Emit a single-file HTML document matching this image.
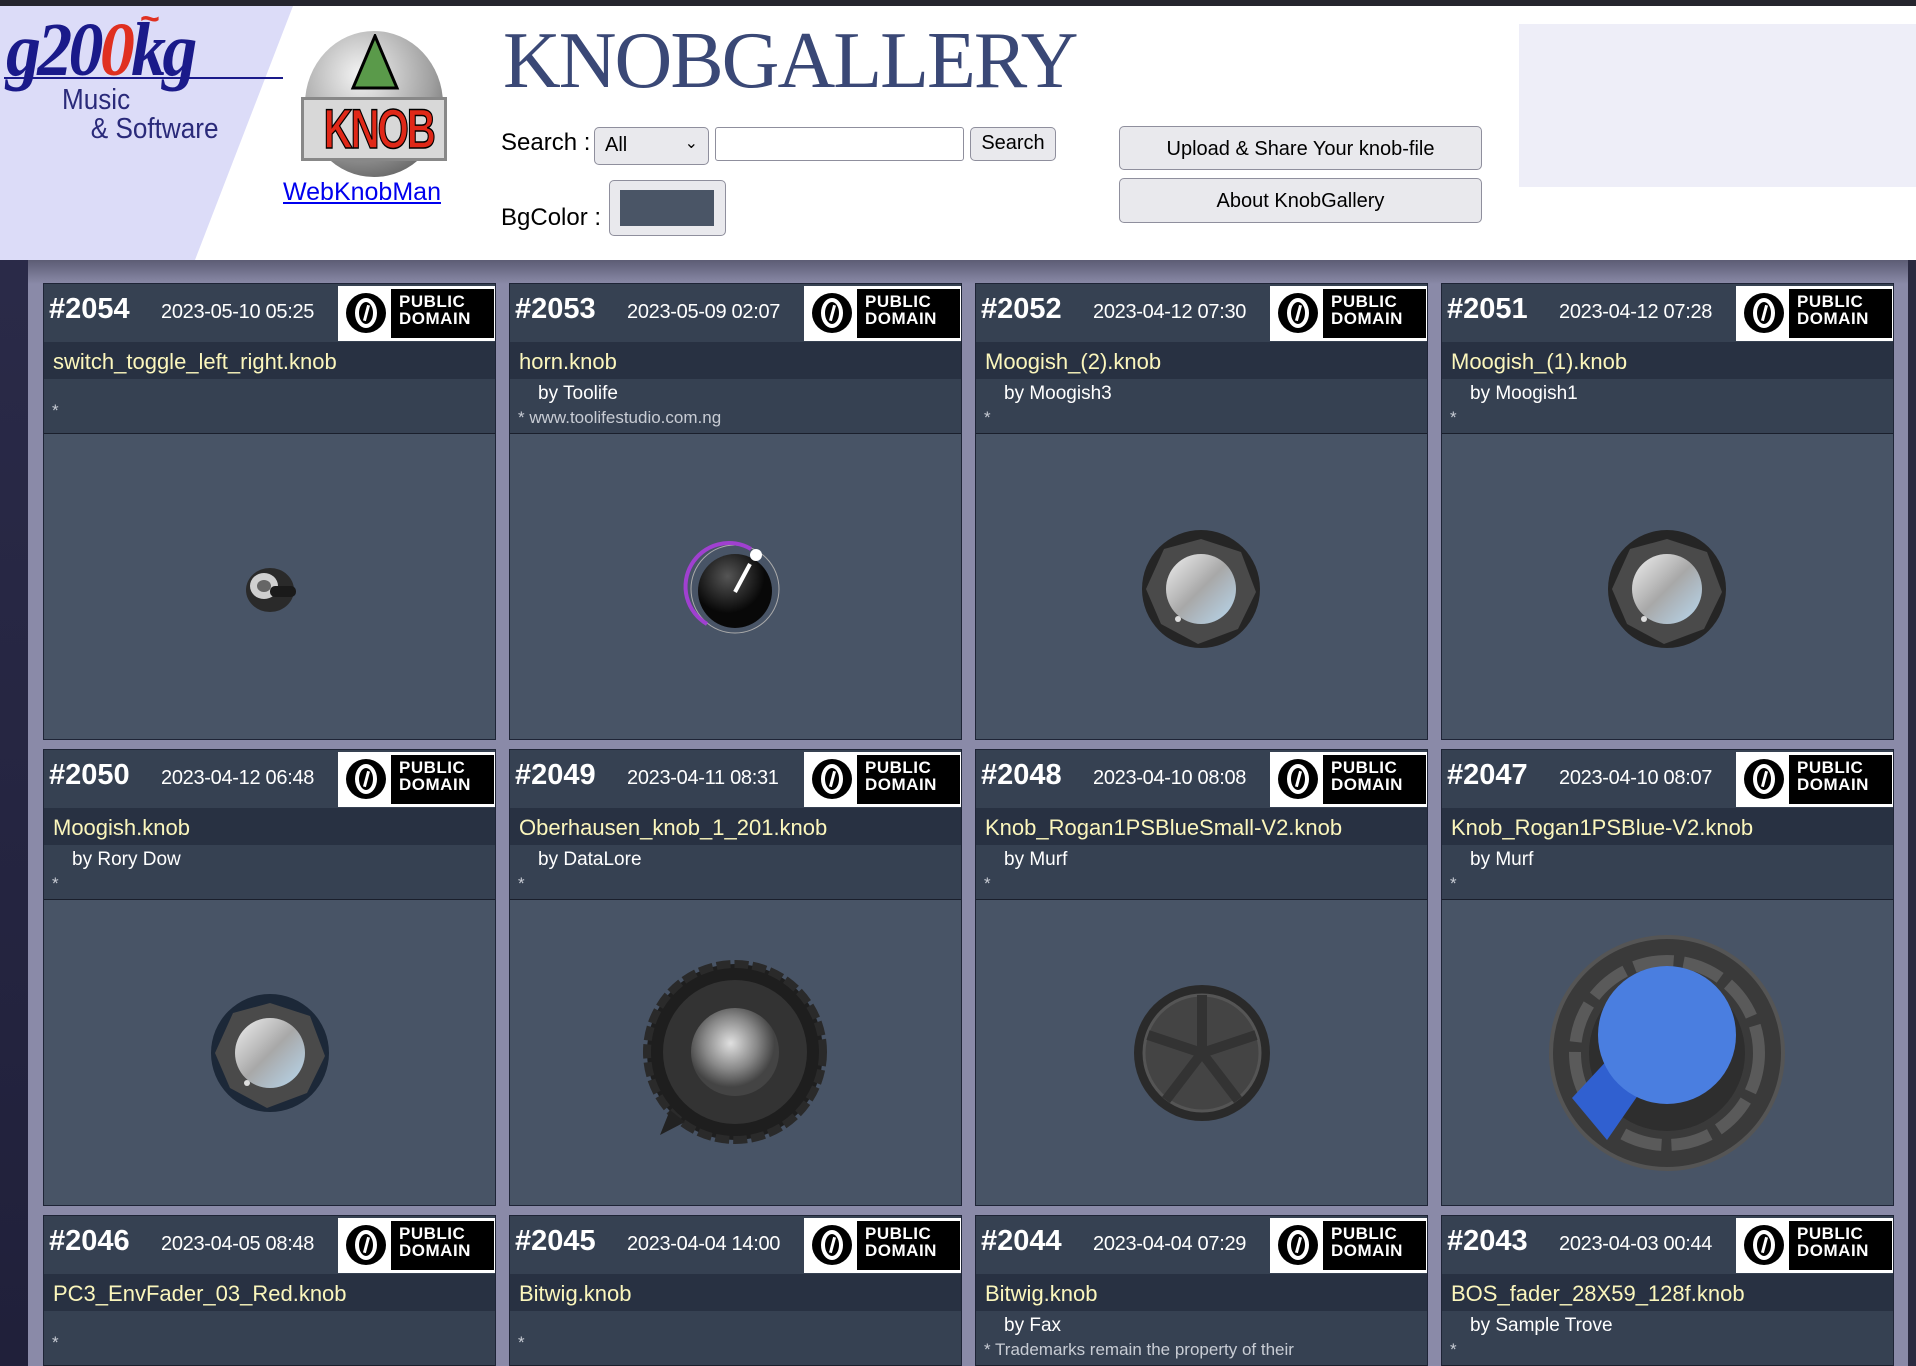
<!DOCTYPE html>
<html><head><meta charset="utf-8">
<style>
*{margin:0;padding:0;box-sizing:border-box}
html,body{width:1916px;height:1366px;overflow:hidden}
body{background:#8a8aa8;font-family:"Liberation Sans",sans-serif;position:relative}
.topbar{position:absolute;left:0;top:0;width:1916px;height:6px;background:#26262e}
.header{position:absolute;left:0;top:6px;width:1916px;height:254px;background:#fff;overflow:hidden}
.tri{position:absolute;left:0;top:0;width:1916px;height:254px;background:#dcdcf8;clip-path:polygon(0 0,293px 0,195px 254px,0 254px)}
.leftstrip{position:absolute;left:0;top:260px;width:28px;height:1106px;background:linear-gradient(#2a2a48,#20203a)}
.rightstrip{position:absolute;left:1908px;top:260px;width:8px;height:1106px;background:#2a2a40}
.topshade{position:absolute;left:28px;top:260px;width:1880px;height:24px;background:linear-gradient(#5c5c74,#8a8aa8)}
.card{position:absolute;width:453px;height:457px;background:#485466;border:1px solid #1e2436;overflow:hidden}
.r3{height:151px;border-bottom:none}
.hd{position:absolute;left:0;top:0;width:451px;height:58px;background:#364152}
.num{position:absolute;left:5px;top:9px;color:#fff;font-weight:bold;font-size:29px}
.date{position:absolute;left:117px;top:17px;color:#fff;font-size:20px;letter-spacing:-0.3px}
.pd{position:absolute;left:294px;top:2px;width:158px;height:55px;background:#000;border:3px solid #fff;border-right-width:2px}
.pd .c{position:absolute;left:0;top:0;width:50px;height:49px;background:#fff}
.pd .c:after{content:"";position:absolute;left:5px;top:4px;width:40px;height:40px;border-radius:50%;background:#000}
.pd .c span{position:absolute;left:14px;top:9px;width:22px;height:30px;border-radius:50%;border:4px solid #fff;z-index:2}
.pd .c span:after{content:"";position:absolute;left:6px;top:3px;width:3px;height:16px;background:#fff;transform:rotate(15deg)}
.pd .t{position:absolute;left:58px;top:4px;color:#fff;font-weight:bold;font-size:17px;line-height:17px;letter-spacing:0.5px}
.tt{position:absolute;left:0;top:58px;width:451px;height:37px;background:#283142;color:#fbf6bc;font-size:22px;padding:7px 0 0 9px}
.info{position:absolute;left:0;top:95px;width:451px;height:55px;background:#364152;border-bottom:1px solid #1a1f2c}
.by{position:absolute;left:28px;top:4px;color:#fff;font-size:19px}
.ast{position:absolute;left:8px;top:29px;color:#c8ccd4;font-size:17px}
.img{position:absolute;left:0;top:150px;width:451px;height:305px}
.img svg{position:absolute;left:0;top:0}
.btn{position:absolute;background:#e9e9ed;border:1px solid #8f8f9d;border-radius:5px;font-size:20px;color:#000;text-align:center}
</style></head><body>
<div class="topbar"></div>
<div class="header">
 <div class="tri"></div>
 <div style="position:absolute;left:6px;top:6px;font-family:'Liberation Serif',serif;font-style:italic;font-weight:bold;font-size:76px;color:#1a1a8a;letter-spacing:-4px;line-height:76px;transform:scaleX(0.92);transform-origin:left">g20<span style="color:#e03020">0</span>kg</div>
 <div style="position:absolute;left:140px;top:-6px;color:#e03020;font-size:34px;font-weight:bold">~</div>
 <div style="position:absolute;left:4px;top:71px;width:279px;height:2px;background:#1a1a8a"></div>
 <div style="position:absolute;left:62px;top:80px;color:#2a2a7a;font-size:29px;line-height:29px;transform:scaleX(0.9);transform-origin:left">Music<br><span style="margin-left:32px">&amp; Software</span></div>
 <div style="position:absolute;left:305px;top:25px;width:138px;height:146px;border-radius:50%;background:radial-gradient(circle at 40% 30%,#f4f4f4,#a0a0a0 55%,#404040)"></div>
 <svg style="position:absolute;left:345px;top:28px" width="60" height="58"><polygon points="30,2 52,54 8,54" fill="#5a9a4a" stroke="#000" stroke-width="3"/></svg>
 <div style="position:absolute;left:301px;top:91px;width:146px;height:64px;border:3px solid #888;background:#d8d8d8;overflow:hidden"><div style="color:#e02818;font-weight:bold;font-size:56px;line-height:58px;text-align:center;letter-spacing:-3px;transform:scaleX(0.72);-webkit-text-stroke:1.5px #000">KNOB</div></div>
 <div style="position:absolute;left:283px;top:172px;color:#0000ee;font-size:25px;text-decoration:underline">WebKnobMan</div>
 <div style="position:absolute;left:503px;top:6px;font-family:'Liberation Serif',serif;font-size:80px;color:#3a4876;letter-spacing:-2px;line-height:98px">KNOBGALLERY</div>
 <div style="position:absolute;left:501px;top:123px;font-size:24px;color:#000">Search :</div>
 <div class="btn" style="left:594px;top:121px;width:115px;height:38px;text-align:left;padding:6px 0 0 10px">All<span style="position:absolute;right:10px;top:5px;font-size:16px">&#8964;</span></div>
 <div style="position:absolute;left:715px;top:121px;width:249px;height:34px;background:#fff;border:1px solid #8f8f9d;border-radius:3px"></div>
 <div class="btn" style="left:970px;top:121px;width:86px;height:34px;padding-top:4px">Search</div>
 <div style="position:absolute;left:501px;top:198px;font-size:24px;color:#000">BgColor :</div>
 <div class="btn" style="left:609px;top:174px;width:117px;height:56px"><div style="position:absolute;left:10px;top:9px;width:94px;height:36px;background:#4a5566"></div></div>
 <div class="btn" style="left:1119px;top:120px;width:363px;height:44px;padding-top:11px">Upload &amp; Share Your knob-file</div>
 <div class="btn" style="left:1119px;top:172px;width:363px;height:45px;padding-top:11px">About KnobGallery</div>
 <div style="position:absolute;left:1519px;top:18px;width:397px;height:163px;background:#eeeef8"></div>
</div>
<div class="leftstrip"></div><div class="rightstrip"></div><div class="topshade"></div>

<!-- Row 1 -->
<div class="card" style="left:43px;top:283px"><div class="hd"><div class="num">#2054</div><div class="date">2023-05-10 05:25</div><div class="pd"><div class="c"><span></span></div><div class="t">PUBLIC<br>DOMAIN</div></div></div><div class="tt">switch_toggle_left_right.knob</div><div class="info"><div class="ast" style="top:22px">*</div></div>
<div class="img"><svg width="451" height="305"><ellipse cx="226" cy="156" rx="24" ry="22" fill="#2a2a2a"/><ellipse cx="220" cy="152" rx="14" ry="13" fill="#d0d0d0"/><ellipse cx="220" cy="152" rx="7" ry="6" fill="#666"/><rect x="226" y="152" width="26" height="11" rx="5" fill="#1a1a1a"/></svg></div></div>

<div class="card" style="left:509px;top:283px"><div class="hd"><div class="num">#2053</div><div class="date">2023-05-09 02:07</div><div class="pd"><div class="c"><span></span></div><div class="t">PUBLIC<br>DOMAIN</div></div></div><div class="tt">horn.knob</div><div class="info"><div class="by">by Toolife</div><div class="ast">* www.toolifestudio.com.ng</div></div>
<div class="img"><svg width="451" height="305"><defs><radialGradient id="hg" cx=".4" cy=".3"><stop offset="0" stop-color="#555"/><stop offset="1" stop-color="#080808"/></radialGradient></defs><circle cx="225" cy="155" r="44" fill="none" stroke="#aaa" stroke-width="1"/><path d="M197,190 A42,42 0 0 1 241,115" fill="none" stroke="#a040d0" stroke-width="4"/><circle cx="225" cy="157" r="37" fill="url(#hg)"/><line x1="225" y1="158" x2="240" y2="130" stroke="#fff" stroke-width="4"/><circle cx="246" cy="121" r="6" fill="#fff"/></svg></div></div>

<div class="card" style="left:975px;top:283px"><div class="hd"><div class="num">#2052</div><div class="date">2023-04-12 07:30</div><div class="pd"><div class="c"><span></span></div><div class="t">PUBLIC<br>DOMAIN</div></div></div><div class="tt">Moogish_(2).knob</div><div class="info"><div class="by">by Moogish3</div><div class="ast">*</div></div>
<div class="img"><svg width="451" height="305"><defs><linearGradient id="mg" x1="0" y1="0" x2="1" y2="1"><stop offset="0" stop-color="#f0f0f0"/><stop offset=".5" stop-color="#a8a8a8"/><stop offset="1" stop-color="#b8d8f0"/></linearGradient></defs><circle cx="225" cy="155" r="59" fill="#252525"/><polygon points="225,105 265,118 280,158 262,195 222,210 185,190 170,155 188,115" fill="#4a4a4a"/><circle cx="225" cy="155" r="35" fill="url(#mg)"/><circle cx="202" cy="185" r="3" fill="#ddd"/></svg></div></div>

<div class="card" style="left:1441px;top:283px"><div class="hd"><div class="num">#2051</div><div class="date">2023-04-12 07:28</div><div class="pd"><div class="c"><span></span></div><div class="t">PUBLIC<br>DOMAIN</div></div></div><div class="tt">Moogish_(1).knob</div><div class="info"><div class="by">by Moogish1</div><div class="ast">*</div></div>
<div class="img"><svg width="451" height="305"><circle cx="225" cy="155" r="59" fill="#252525"/><polygon points="225,105 265,118 280,158 262,195 222,210 185,190 170,155 188,115" fill="#4a4a4a"/><circle cx="225" cy="155" r="35" fill="url(#mg)"/><circle cx="202" cy="185" r="3" fill="#ddd"/></svg></div></div>

<!-- Row 2 -->
<div class="card" style="left:43px;top:749px"><div class="hd"><div class="num">#2050</div><div class="date">2023-04-12 06:48</div><div class="pd"><div class="c"><span></span></div><div class="t">PUBLIC<br>DOMAIN</div></div></div><div class="tt">Moogish.knob</div><div class="info"><div class="by">by Rory Dow</div><div class="ast">*</div></div>
<div class="img"><svg width="451" height="305"><circle cx="226" cy="153" r="59" fill="#1c2838"/><polygon points="226,103 266,116 281,156 263,193 223,208 186,188 171,153 189,113" fill="#4a4a4a"/><circle cx="226" cy="153" r="35" fill="url(#mg)"/><circle cx="203" cy="183" r="3" fill="#ddd"/></svg></div></div>

<div class="card" style="left:509px;top:749px"><div class="hd"><div class="num">#2049</div><div class="date">2023-04-11 08:31</div><div class="pd"><div class="c"><span></span></div><div class="t">PUBLIC<br>DOMAIN</div></div></div><div class="tt">Oberhausen_knob_1_201.knob</div><div class="info"><div class="by">by DataLore</div><div class="ast">*</div></div>
<div class="img"><svg width="451" height="305"><defs><radialGradient id="og" cx=".45" cy=".4"><stop offset="0" stop-color="#e0e0e0"/><stop offset=".6" stop-color="#888"/><stop offset="1" stop-color="#444"/></radialGradient></defs><circle cx="225" cy="152" r="88" fill="#1e1e1e" stroke="#2a2a2a" stroke-width="8" stroke-dasharray="14 4"/><circle cx="225" cy="152" r="72" fill="#333"/><circle cx="225" cy="152" r="44" fill="url(#og)"/><polygon points="160,210 150,235 175,222" fill="#222"/></svg></div></div>

<div class="card" style="left:975px;top:749px"><div class="hd"><div class="num">#2048</div><div class="date">2023-04-10 08:08</div><div class="pd"><div class="c"><span></span></div><div class="t">PUBLIC<br>DOMAIN</div></div></div><div class="tt">Knob_Rogan1PSBlueSmall-V2.knob</div><div class="info"><div class="by">by Murf</div><div class="ast">*</div></div>
<div class="img"><svg width="451" height="305"><circle cx="226" cy="153" r="68" fill="#2a2a2a"/><circle cx="226" cy="153" r="58" fill="#444" stroke="#555" stroke-width="3"/><path d="M226,153 L226,95 M226,153 L280,135 M226,153 L262,200 M226,153 L190,200 M226,153 L172,135" stroke="#333" stroke-width="10"/></svg></div></div>

<div class="card" style="left:1441px;top:749px"><div class="hd"><div class="num">#2047</div><div class="date">2023-04-10 08:07</div><div class="pd"><div class="c"><span></span></div><div class="t">PUBLIC<br>DOMAIN</div></div></div><div class="tt">Knob_Rogan1PSBlue-V2.knob</div><div class="info"><div class="by">by Murf</div><div class="ast">*</div></div>
<div class="img"><svg width="451" height="305"><circle cx="225" cy="153" r="116" fill="#3a3a3a" stroke="#555" stroke-width="4"/><circle cx="225" cy="153" r="92" fill="none" stroke="#5a5a5a" stroke-width="12" stroke-dasharray="40 10"/><circle cx="225" cy="153" r="78" fill="#2e2e2e"/><polygon points="130,198 165,240 210,175 170,155" fill="#3060d0"/><circle cx="225" cy="135" r="69" fill="#4a7ee0"/></svg></div></div>

<!-- Row 3 -->
<div class="card r3" style="left:43px;top:1215px"><div class="hd"><div class="num">#2046</div><div class="date">2023-04-05 08:48</div><div class="pd"><div class="c"><span></span></div><div class="t">PUBLIC<br>DOMAIN</div></div></div><div class="tt">PC3_EnvFader_03_Red.knob</div><div class="info"><div class="ast" style="top:22px">*</div></div></div>
<div class="card r3" style="left:509px;top:1215px"><div class="hd"><div class="num">#2045</div><div class="date">2023-04-04 14:00</div><div class="pd"><div class="c"><span></span></div><div class="t">PUBLIC<br>DOMAIN</div></div></div><div class="tt">Bitwig.knob</div><div class="info"><div class="ast" style="top:22px">*</div></div></div>
<div class="card r3" style="left:975px;top:1215px"><div class="hd"><div class="num">#2044</div><div class="date">2023-04-04 07:29</div><div class="pd"><div class="c"><span></span></div><div class="t">PUBLIC<br>DOMAIN</div></div></div><div class="tt">Bitwig.knob</div><div class="info"><div class="by">by Fax</div><div class="ast">* Trademarks remain the property of their</div></div></div>
<div class="card r3" style="left:1441px;top:1215px"><div class="hd"><div class="num">#2043</div><div class="date">2023-04-03 00:44</div><div class="pd"><div class="c"><span></span></div><div class="t">PUBLIC<br>DOMAIN</div></div></div><div class="tt">BOS_fader_28X59_128f.knob</div><div class="info"><div class="by">by Sample Trove</div><div class="ast">*</div></div></div>
</body></html>
